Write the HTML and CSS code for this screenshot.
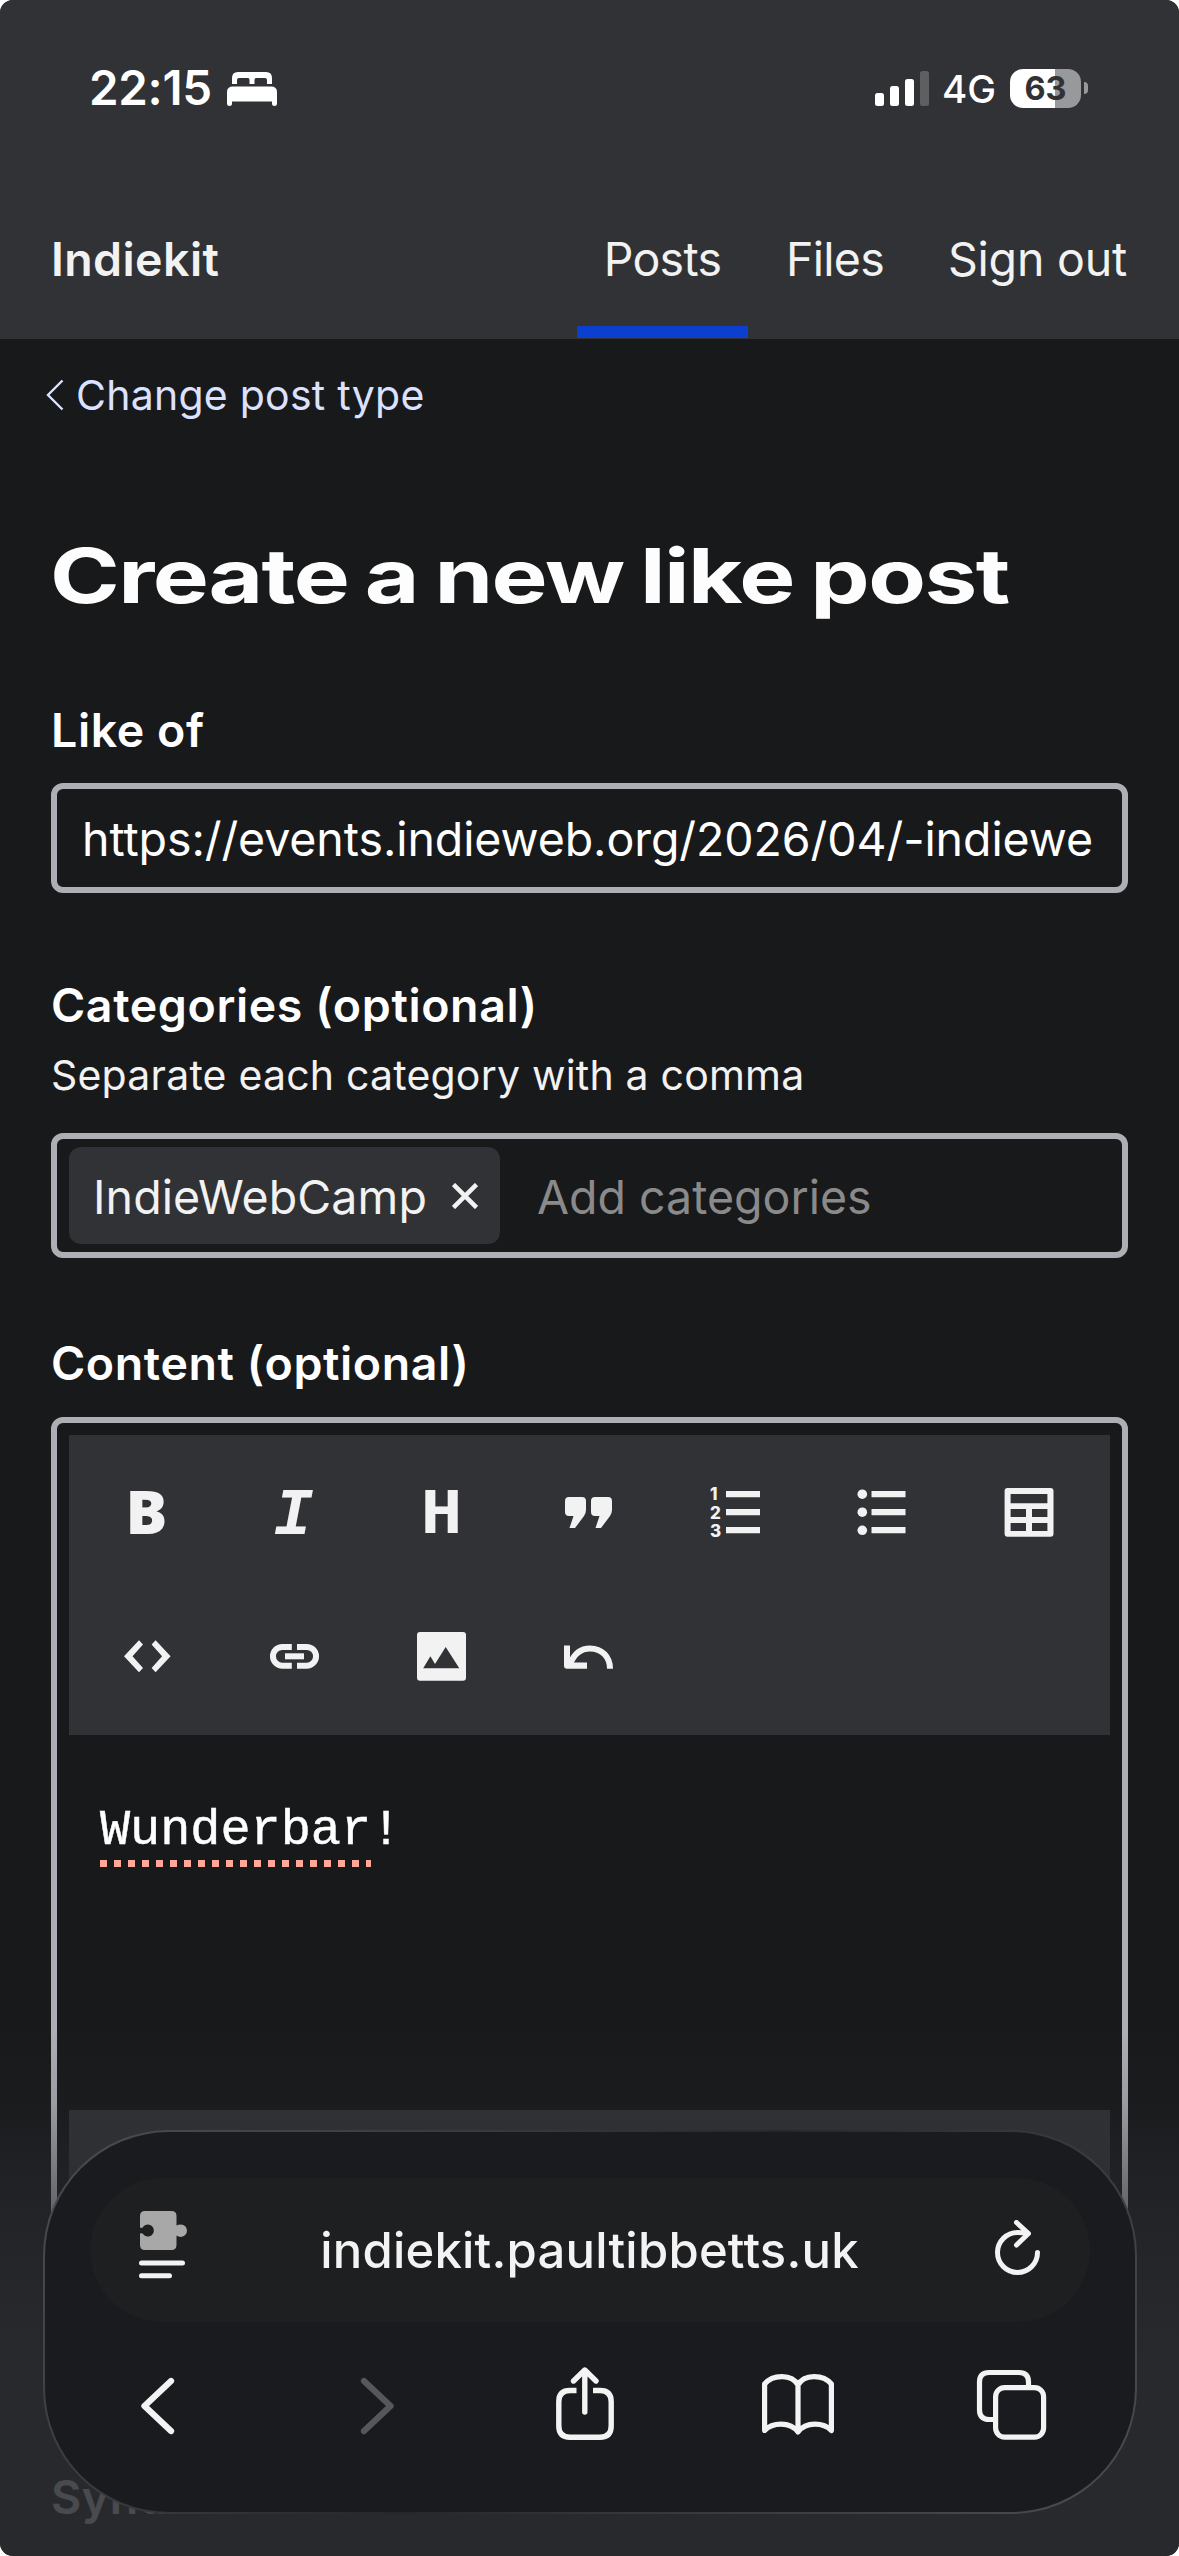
FILE: index.html
```
<!DOCTYPE html>
<html lang="en">
<head>
<meta charset="utf-8">
<title>Create a new like post - Indiekit</title>
<link rel="stylesheet" href="styles.css">
</head>
<body>
<div class="screen">
  <div class="status">
    <div class="status-left">
      <span class="clock">22:15</span>
      <svg class="bed" width="50" height="34" viewBox="0 0 50 34" fill="#fff"><path d="M5 12V6Q5 0 11 0H39Q45 0 45 6V12H40V8Q40 6 38 6H29Q27.500 6 27.500 8V12H22.500V8Q22.500 6 21 6H12Q10 6 10 8V12Z"/><path d="M0 32V20Q0 14.500 6 14.500H44Q50 14.500 50 20V32Q50 34 47.500 34Q45 34 45 32V29.500H5V32Q5 34 2.500 34Q0 34 0 32Z"/></svg>
    </div>
    <div class="status-right">
      <svg class="signal" width="54" height="35" viewBox="0 0 54 35" fill="#fff"><rect y="22" width="9" height="13" rx="2.500"/><rect x="15" y="15" width="9" height="20" rx="2.500"/><rect x="30" y="8" width="9" height="27" rx="2.500"/><rect x="45" width="9" height="35" rx="2.500" opacity=".22"/></svg>
      <span class="network">4G</span>
      <span class="battery">63</span>
      <span class="nub"></span>
    </div>
  </div>

  <header class="header">
    <a class="brand">Indiekit</a>
    <nav class="nav">
      <a class="nav-link active">Posts</a>
      <a class="nav-link files">Files</a>
      <a class="nav-link signout">Sign out</a>
    </nav>
  </header>

  <main class="main">
    <a class="back">
      <svg width="18" height="32" viewBox="0 0 18 32" fill="none" stroke="#dbe2ff" stroke-width="2.400"><path d="M16.500 1.500L2 16L16.500 30.500"/></svg>
      <span>Change post type</span>
    </a>
    <h1 class="title">Create a new like post</h1>

    <label class="label">Like of</label>
    <div class="input url"><span class="url-value">https://events.indieweb.org/2026/04/-indiewe</span></div>

    <label class="label label-categories">Categories (optional)</label>
    <p class="hint">Separate each category with a comma</p>
    <div class="input tags">
      <span class="tag"><span class="tag-text">IndieWebCamp</span><svg width="26" height="26" viewBox="0 0 26 26" stroke="#f2f2f2" stroke-width="4.500"><path d="M1.500 1.500L24.500 24.500M24.500 1.500L1.500 24.500"/></svg></span>
      <span class="placeholder">Add categories</span>
    </div>

    <label class="label label-content">Content (optional)</label>
    <div class="editor">
      <div class="toolbar">
        <span class="tool bold">B</span>
        <span class="tool italic">I</span>
        <span class="tool heading">H</span>
        <span class="tool"><svg width="54" height="54" viewBox="0 0 54 54"><path d="M8 12H21Q25 12 25 16V25Q25 28 23 31L14 43H8.500L12.500 31H8Q4 31 4 27V16Q4 12 8 12Z"/><path d="M34 12H47Q51 12 51 16V25Q51 28 49 31L40 43H34.500L38.500 31H34Q30 31 30 27V16Q30 12 34 12Z"/></svg></span>
        <span class="tool"><svg width="54" height="54" viewBox="0 0 54 54"><path d="M18 6H52V12.300H18ZM18 24H52V30.300H18ZM18 42H52V48.300H18Z"/><g class="digits"><text x="2" y="15">1</text><text x="2" y="33.500">2</text><text x="2" y="51.700">3</text></g></svg></span>
        <span class="tool"><svg width="54" height="54" viewBox="0 0 54 54"><circle cx="7.300" cy="9.200" r="4.800"/><circle cx="7.300" cy="27.200" r="4.800"/><circle cx="7.300" cy="45.300" r="4.800"/><path d="M16.500 6H50.500V12.300H16.500ZM16.500 24H50.500V30.300H16.500ZM16.500 42H50.500V48.300H16.500Z"/></svg></span>
        <span class="tool"><svg width="54" height="54" viewBox="0 0 54 54"><path fill-rule="evenodd" d="M5.500 3H48.500Q51.500 3 51.500 6V48.700Q51.500 51.700 48.500 51.700H5.500Q2.600 51.700 2.600 48.700V6Q2.600 3 5.500 3ZM8.600 9V18.200H45.400V9ZM8.600 24V32H24V24ZM30 24V32H45.400V24ZM8.600 38V46H24V38ZM30 38V46H45.400V38Z"/></svg></span>
        <span class="tool"><svg width="54" height="54" viewBox="0 0 54 54"><path d="M4 27.300L19 11.300L23 15.500L12.500 27.300L23 39L19 43.300ZM50.600 27.300L35.600 11.300L31.600 15.500L42.100 27.300L31.600 39L35.600 43.300Z"/></svg></span>
        <span class="tool"><svg width="54" height="54" viewBox="0 0 54 54"><path d="M24.800 18H15.300A9.300 9.300 0 0 0 15.300 36.700H24.800M30 18H39.700A9.300 9.300 0 0 1 39.700 36.700H30" fill="none" stroke="#f2f2f2" stroke-width="6"/><path d="M18 24.300H37V30.300H18Z"/></svg></span>
        <span class="tool"><svg width="54" height="54" viewBox="0 0 54 54"><path fill-rule="evenodd" d="M6 3H49Q52 3 52 6V48.700Q52 51.700 49 51.700H6Q3 51.700 3 48.700V6Q3 3 6 3ZM9.200 39.300H45.300L31.700 18L21 35L16.400 27.300Z"/></svg></span>
        <span class="tool"><svg width="54" height="54" viewBox="0 0 54 54"><path d="M3 16.500H9V33.500H26V39.700H6Q3 39.700 3 36.700Z"/><path d="M9 35C13 25 20 19.400 29 19.400C41 19.400 49 28 49 39.700" fill="none" stroke="#f2f2f2" stroke-width="6"/></svg></span>
      </div>
      <div class="text"><span class="misspelled">Wunderbar</span>!</div>
      <div class="statusbar"></div>
    </div>

    <label class="label label-syndication">Syndicate to</label>
  </main>

  <div class="fade"></div>

  <div class="browser">
    <div class="address">
      <svg class="page-menu" width="52" height="70" viewBox="0 0 52 70"><path fill="#a8a8a8" d="M6 0H32.500Q37.500 0 37.500 5V14.500Q39 13.500 42 13.500A6 6.200 0 0 1 42 25.900Q39 25.900 37.500 24.500V34Q37.500 39 32.500 39H6Q1 39 1 34V22.500Q3.500 22 4 23A6 6 0 1 0 4 16Q3 17.500 1 16.500V5Q1 0 6 0Z"/><path d="M2.500 52H43.500M2.500 64.700H30.500" stroke="#f3f3f3" stroke-width="5" stroke-linecap="round"/></svg>
      <span class="host">indiekit.paultibbetts.uk</span>
      <svg width="50" height="60" viewBox="0 0 50 60" fill="none" stroke="#f3f3f3" stroke-width="5" stroke-linecap="round" stroke-linejoin="round"><path d="M44.500 32.500A20 20 0 1 1 24.500 12.500Q30 12.500 34.500 13.500"/><path d="M23.500 2.500L35.500 13.500L23.500 25"/></svg>
    </div>
    <div class="actions">
      <svg width="76" height="80" viewBox="0 0 76 80" fill="none" stroke="#f3f3f3" stroke-width="6.300" stroke-linecap="round" stroke-linejoin="round"><path d="M51 16L24.500 41L51 66"/></svg>
      <svg width="76" height="80" viewBox="0 0 76 80" fill="none" stroke="#56575b" stroke-width="6.300" stroke-linecap="round" stroke-linejoin="round"><path d="M31 16L57.500 41L31 66"/></svg>
      <svg width="76" height="80" viewBox="0 0 76 80" fill="none" stroke="#f3f3f3" stroke-width="5.400"><path d="M29.500 25.500H23Q11.800 25.500 11.800 36.700V61Q11.800 72.200 23 72.200H53Q64.200 72.200 64.200 61V36.700Q64.200 25.500 53 25.500H46"/><path d="M37.800 47V5.500M26.500 16L37.800 5L49 16" stroke-linecap="round" stroke-linejoin="round"/></svg>
      <svg width="76" height="80" viewBox="0 0 76 80" fill="none" stroke="#f3f3f3" stroke-width="5.200" stroke-linejoin="round"><path d="M38 20C32 9 13 9 4.600 19V65.500C12 57.500 30 56 38 67C46 56 64 57.500 71.400 65.500V19C63 9 44 9 38 20V66"/></svg>
      <svg width="76" height="80" viewBox="0 0 76 80" fill="none" stroke="#f3f3f3" stroke-width="5.200"><path d="M23 54.500H16Q6.500 54.500 6.500 45V17Q6.500 7.500 16 7.500H46Q55.500 7.500 55.500 17V24"/><rect x="22.600" y="22.600" width="48" height="49.500" rx="9"/></svg>
    </div>
  </div>
</div>
</body>
</html>
```
FILE: styles.css
```
* { box-sizing: border-box; }

body {
  margin: 0;
  background: #fff;
  font-family: Inter, "Liberation Sans", sans-serif;
  font-size: 46.5px;
  color: #f2f2f2;
}

svg { display: block; flex: none; }

.screen {
  position: relative;
  width: 1179px;
  height: 2556px;
  overflow: hidden;
  border-radius: 13px;
  background: #18191b;
  white-space: nowrap;
}

/* Phone status bar */
.status {
  display: flex;
  justify-content: space-between;
  align-items: center;
  height: 176px;
  padding: 0 91px 0 89px;
  background: #313235;
  color: #fff;
}
.status-left, .status-right { display: flex; align-items: center; }
.clock { width: 138px; margin-bottom: 2px; font-size: 47.5px; font-weight: 600; letter-spacing: -0.3px; }
.bed { margin-top: 1px; }
.network { width: 66px; padding-left: 13px; font-size: 38.5px; font-weight: 500; margin-top: 2px; }
.battery {
  width: 71px;
  height: 39px;
  margin-left: 15px;
  border-radius: 13px;
  background: linear-gradient(90deg, #fff 45px, #98999b 45px);
  color: #313235;
  font-size: 32.5px;
  font-weight: 700;
  line-height: 39px;
  text-align: center;
}
.nub { width: 4px; height: 12px; margin-left: 3px; border-radius: 0 4px 4px 0; background: #98999b; }

/* Site header */
.header {
  display: flex;
  justify-content: space-between;
  height: 163px;
  padding: 0 51px;
  background: #313235;
}
.brand, .nav-link { line-height: 166px; }
.brand { font-weight: 600; letter-spacing: 0.4px; }
.nav { display: flex; gap: 12px; margin-right: -26px; }
.nav-link { height: 162px; text-align: center; letter-spacing: -0.7px; }
.nav-link.active { width: 171px; border-bottom: 12px solid #0b3fd0; }
.files { width: 149px; padding-left: 1px; }
.signout { width: 233px; letter-spacing: -0.2px; }

/* Form */
.main { padding: 0 51px; }
.back { display: flex; align-items: center; gap: 12px; height: 111px; margin-left: -5px; font-size: 41px; letter-spacing: 0.25px; color: #dbe2ff; }
.title {
  width: max-content;
  margin: 81px 0 0 -1px;
  font-size: 75px;
  font-weight: 700;
  line-height: 90px;
  letter-spacing: -1.2px;
  word-spacing: -3.5px;
  color: #fdfdfd;
  transform: scaleX(1.257);
  transform-origin: left;
}
.label { display: block; margin-top: 79px; font-weight: 600; line-height: 60px; letter-spacing: 0.6px; color: #fff; }
.label-categories { margin-top: 82px; }
.label-content { margin-top: 75px; }
.label-syndication { margin-top: 219px; }
.hint { margin: 16px 0 34px; font-size: 41px; line-height: 48px; letter-spacing: 0.2px; }
.input {
  display: flex;
  align-items: center;
  height: 110px;
  margin-top: 23px;
  border: 6px solid #aeafb5;
  border-radius: 12px;
  color: #fff;
}
.url { padding: 1px 0 0 25px; letter-spacing: -0.08px; }
.tags { height: 125px; padding: 0 12px; }
.tag {
  display: flex;
  align-items: center;
  justify-content: space-between;
  width: 431px;
  height: 97px;
  padding: 0 22px 0 24px;
  border-radius: 12px;
  background: #313235;
  color: #f2f2f2;
}
.tag-text { padding-top: 3px; letter-spacing: 0.1px; }
.placeholder { padding: 3px 0 0 37px; color: #8a8a8b; }

/* Markdown editor */
.editor { margin-top: 24px; padding: 12px; border: 6px solid #aeafb5; border-radius: 12px; }
.toolbar {
  display: grid;
  grid-template-columns: repeat(7, 147px);
  grid-auto-rows: 144px;
  height: 300px;
  padding: 5px 0 0 4.5px;
  background: #313235;
}
.tool { display: flex; align-items: center; justify-content: center; fill: #f2f2f2; }
.bold { padding: 0 2px 2px 0; font: 800 61px/60px "Open Sans", sans-serif; transform: scaleX(1.02); }
.italic { padding: 9px 2px 0 0; font: italic 700 66px/60px "Liberation Mono", monospace; }
.heading { padding-top: 2px; font: 700 59px/60px "DejaVu Sans Mono", monospace; transform: scaleX(1.17); }
.digits { font: 800 17px Inter, sans-serif; }
.text {
  height: 375px;
  padding: 66px 31px;
  font: 50.2px/60px "Liberation Mono", monospace;
  color: #fff;
  -webkit-text-stroke: 0.5px #fff;
}
.misspelled {
  padding-bottom: 8px;
  background: repeating-linear-gradient(90deg, #ffa79b 0 7px, transparent 7px 14px) left bottom / 100% 7px no-repeat;
}
.statusbar { height: 120px; background: #313235; }

/* Page content dims behind the floating browser bar */
.fade {
  position: absolute;
  inset: 2030px 0 0;
  background: linear-gradient(rgba(43,44,48,0), rgba(43,44,48,.15) 75px, rgba(43,44,48,.55) 175px, rgba(43,44,48,.85) 330px, rgba(43,44,48,.86));
}
.browser {
  position: absolute;
  left: 43px;
  top: 2130px;
  width: 1094px;
  height: 384px;
  padding: 46px 45px 0;
  border: 2px solid transparent;
  border-radius: 126px;
  background:
    linear-gradient(#1a1b1f, #1a1b1f) padding-box,
    linear-gradient(135deg, #4b4d55, #34363c 35%, #26272b 50%, #34363c 65%, #4b4d55) border-box;
}
.address {
  display: flex;
  align-items: center;
  justify-content: space-between;
  height: 144px;
  padding: 0 47px 0 49px;
  border-radius: 72px;
  background: #1e1f20;
}
.page-menu { margin-bottom: 8px; }
.host { margin-right: 5px; font-size: 49px; font-weight: 500; letter-spacing: 0.2px; color: #f3f3f3; }
.actions { display: flex; justify-content: space-between; padding: 43px 41px 0 30px; }
```
